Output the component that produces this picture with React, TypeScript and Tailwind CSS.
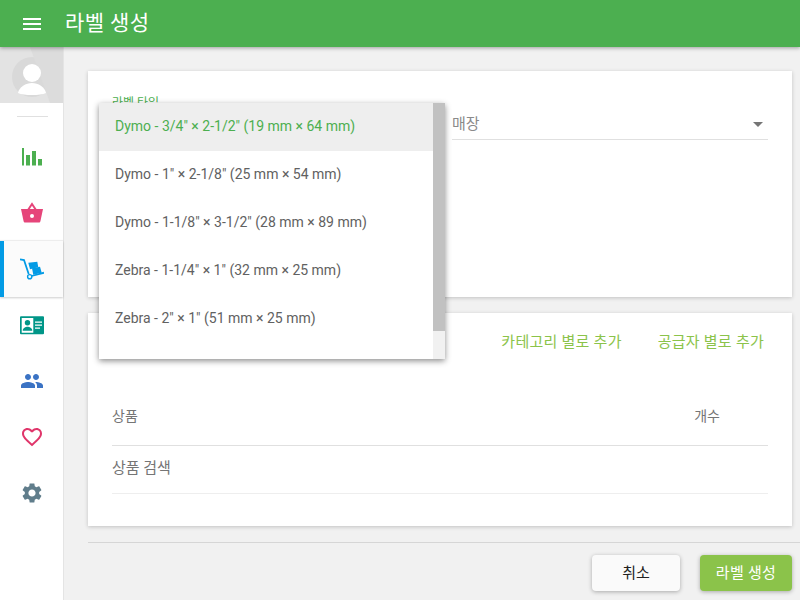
import type { ReactNode } from 'react';

const FONT = "font-['Roboto','Noto_Sans_CJK_KR',sans-serif]";

const LABEL_TYPES = [
  'Dymo - 3/4" × 2-1/2" (19 mm × 64 mm)',
  'Dymo - 1" × 2-1/8" (25 mm × 54 mm)',
  'Dymo - 1-1/8" × 3-1/2" (28 mm × 89 mm)',
  'Zebra - 1-1/4" × 1" (32 mm × 25 mm)',
  'Zebra - 2" × 1" (51 mm × 25 mm)',
];

function NavIcon({ color, children }: { color: string; children: ReactNode }) {
  return (
    <svg width={24} height={24} viewBox="0 0 24 24" fill={color}>
      {children}
    </svg>
  );
}

const NAV_ITEMS = [
  {
    key: 'stats',
    icon: (
      <NavIcon color="#4caf50">
        <path d="M2 3h2v17.600H2zM6 10h4v10.600H6zM12 6h4v14.600h-4zM18 14h4v6.600h-4z" />
      </NavIcon>
    ),
  },
  {
    key: 'basket',
    icon: (
      <NavIcon color="#e6457a">
        <path d="M1 8h22l-2.600 12.200c-.200.800-.700 1.300-1.500 1.300H5.100c-.800 0-1.300-.500-1.500-1.300z" />
        <path d="M8 9l4-6 4 6" fill="none" stroke="#e6457a" strokeWidth="2" />
        <circle cx="12" cy="15" r="2" fill="#fff" />
      </NavIcon>
    ),
  },
  {
    key: 'dolly',
    active: true,
    icon: (
      <NavIcon color="#039be5">
        <path d="M0 2.300L4 3l4.700 14" fill="none" stroke="#039be5" strokeWidth="1.800" />
        <circle cx="9.700" cy="19.700" r="2.100" fill="none" stroke="#039be5" strokeWidth="1.400" />
        <path d="M11.500 19L24 15.700" fill="none" stroke="#039be5" strokeWidth="1.800" />
        <path d="M8.300 5.700l9-1 1 5.600-8.300 2z" />
        <path d="M12 11.300l8-1.600 1.700 6-8.400 2z" />
      </NavIcon>
    ),
  },
  {
    key: 'customers',
    icon: (
      <NavIcon color="#009688">
        <path
          fillRule="evenodd"
          d="M1 3.300h22a1 1 0 0 1 1 1v16a1 1 0 0 1-1 1H1a1 1 0 0 1-1-1v-16a1 1 0 0 1 1-1zM1.700 5v14.800h11.600V5zM15 8.500v1.300h7V8.500zM15 11.500v1.300h7v-1.300zM15 14.500v1.300h5v-1.300z"
        />
        <circle cx="7.500" cy="9.700" r="2.700" />
        <path d="M2.700 17.800c0-2.700 3-4 4.800-4s4.800 1.300 4.800 4z" />
      </NavIcon>
    ),
  },
  {
    key: 'employees',
    icon: (
      <NavIcon color="#3b73c4">
        <path d="M16 11c1.660 0 2.990-1.340 2.990-3S17.660 5 16 5c-1.660 0-3 1.340-3 3s1.340 3 3 3zm-8 0c1.660 0 2.990-1.340 2.990-3S9.660 5 8 5C6.340 5 5 6.340 5 8s1.340 3 3 3zm0 2c-2.330 0-7 1.170-7 3.500V19h14v-2.500c0-2.330-4.670-3.500-7-3.500zm8 0c-.290 0-.620.020-.970.050 1.160.840 1.970 1.970 1.970 3.450V19h6v-2.500c0-2.330-4.670-3.500-7-3.500z" />
      </NavIcon>
    ),
  },
  {
    key: 'loyalty',
    icon: (
      <NavIcon color="#e0356a">
        <path d="M16.500 3c-1.740 0-3.410.810-4.500 2.090C10.910 3.810 9.240 3 7.500 3 4.420 3 2 5.420 2 8.500c0 3.780 3.400 6.860 8.550 11.540L12 21.350l1.450-1.320C18.600 15.360 22 12.280 22 8.500 22 5.420 19.580 3 16.500 3zm-4.400 15.550l-.100.100-.100-.100C7.140 14.240 4 11.390 4 8.500 4 6.500 5.500 5 7.500 5c1.540 0 3.040.990 3.570 2.360h1.870C13.460 5.990 14.960 5 16.500 5c2 0 3.500 1.500 3.500 3.500 0 2.890-3.140 5.740-7.900 10.050z" />
      </NavIcon>
    ),
  },
  {
    key: 'settings',
    icon: (
      <NavIcon color="#607d8b">
        <path d="M19.140 12.940c.040-.300.060-.610.060-.940 0-.320-.020-.640-.070-.940l2.030-1.580c.180-.140.230-.410.120-.610l-1.920-3.320c-.120-.220-.370-.290-.590-.220l-2.390.960c-.500-.380-1.030-.700-1.620-.940l-.360-2.540c-.040-.240-.240-.410-.480-.410h-3.840c-.240 0-.430.170-.470.410l-.360 2.540c-.590.240-1.130.570-1.620.940l-2.390-.960c-.220-.080-.470 0-.590.220L2.740 8.870c-.120.210-.080.470.120.610l2.030 1.580c-.050.300-.090.630-.090.940s.020.640.070.940l-2.030 1.580c-.180.140-.230.410-.120.610l1.920 3.320c.120.220.370.290.590.220l2.390-.960c.500.380 1.030.700 1.620.940l.360 2.540c.050.240.240.410.480.410h3.840c.240 0 .440-.170.470-.410l.360-2.540c.590-.240 1.130-.560 1.620-.940l2.390.960c.220.080.470 0 .590-.220l1.920-3.320c.120-.220.070-.470-.120-.610l-2.010-1.580zM12 15.600c-1.980 0-3.600-1.620-3.600-3.600s1.620-3.600 3.600-3.600 3.600 1.620 3.600 3.600-1.620 3.600-3.600 3.600z" />
      </NavIcon>
    ),
  },
];

function Avatar() {
  return (
    <div className="h-14 bg-[#e3e3e3] overflow-hidden">
      <svg width="63" height="56" viewBox="0 0 63 56" className="block">
        <circle cx="32" cy="30" r="20" fill="#d9d9d9" />
        <path d="M30 0h33v56H50z" fill="#dcdcdc" />
        <circle cx="32" cy="26" r="9" fill="#fff" />
        <path d="M18 46c1-6 8-10 14-10s13 4 14 10c-3 1.500-8 2-14 2s-11-.500-14-2z" fill="#fff" />
      </svg>
    </div>
  );
}

function Sidebar() {
  return (
    <aside className="w-16 shrink-0 bg-white border-r border-[#e4e4e4] flex flex-col">
      <Avatar />
      <div className="h-[26px] flex items-center justify-center pl-[1px]">
        <div className="w-[31px] h-px bg-[#e0e0e0]" />
      </div>
      <nav className="flex flex-col">
        {NAV_ITEMS.map((item) => (
          <div
            key={item.key}
            className={
              item.active
                ? 'h-14 flex items-center justify-center border-l-4 border-[#039be5] bg-[#fbfbfb] shadow-[0_1px_2px_rgba(0,0,0,0.2),0_-1px_1px_rgba(0,0,0,0.06)] pr-[3px]'
                : 'h-14 flex items-center justify-center pl-[1px]'
            }
          >
            {item.icon}
          </div>
        ))}
      </nav>
    </aside>
  );
}

function LabelDropdown() {
  return (
    <div className="absolute left-[11px] top-[32px] w-[346px] h-[256px] bg-white flex shadow-[0_2px_6px_rgba(0,0,0,0.45)] z-10">
      <ul className="flex-1">
        {LABEL_TYPES.map((label, i) => (
          <li
            key={label}
            className={
              i === 0
                ? 'h-12 px-4 pb-[2px] flex items-center text-sm bg-[#eeeeee] text-[#4caf50]'
                : 'h-12 px-4 pb-[2px] flex items-center text-sm text-[#616161]'
            }
          >
            {label}
          </li>
        ))}
      </ul>
      <div className="w-3 bg-[#f1f1f1]">
        <div className="h-[228px] bg-[#c1c1c1]" />
      </div>
    </div>
  );
}

function TypeCard() {
  return (
    <section className="relative h-[226px] bg-white shadow-[0_1px_4px_rgba(0,0,0,0.2)] px-6">
      <div className="flex gap-6">
        <div className="flex-1 pt-6">
          <div className="text-xs leading-4 text-[#4caf50]">라벨 타입</div>
        </div>
        <div className="w-[316px] mt-[37px] h-8 flex items-start justify-between border-b border-[#e0e0e0]">
          <span className="text-[15px] leading-8 text-[#8a8a8a]">매장</span>
          <span className="mt-[14px] mr-[5px] w-0 h-0 border-x-[5px] border-x-transparent border-t-[5px] border-t-[#757575]" />
        </div>
      </div>
      <LabelDropdown />
    </section>
  );
}

function ProductsCard() {
  return (
    <section className="h-[213px] mt-4 bg-white shadow-[0_1px_4px_rgba(0,0,0,0.2)] px-6">
      <div className="h-14 pt-[2px] flex items-center justify-end gap-9 pr-1 text-[15px] tracking-[0.25px] text-[#8bc34a]">
        <span>카테고리 별로 추가</span>
        <span>공급자 별로 추가</span>
      </div>
      <div className="h-[77px] flex items-center justify-between border-b border-[#e0e0e0] text-sm text-[#757575] pt-[18px] pr-12">
        <span>상품</span>
        <span>개수</span>
      </div>
      <div className="h-12 pb-[2px] flex items-center border-b border-[#eeeeee] text-[15px] text-[#757575]">상품 검색</div>
    </section>
  );
}

export default function App() {
  return (
    <div className={`${FONT} w-[800px] h-[600px] overflow-hidden bg-[#f1f1f1] flex flex-col`}>
      <header className="relative z-20 h-[47px] shrink-0 bg-[#4caf50] shadow-[0_1px_4px_rgba(0,0,0,0.35)] flex items-center pl-5 gap-[21px]">
        <svg width="24" height="24" viewBox="0 0 24 24" fill="#fff">
          <path d="M3 18h18v-2H3v2zm0-5h18v-2H3v2zm0-7v2h18V6H3z" />
        </svg>
        <h1 className="text-[21px] tracking-[0.4px] font-normal text-white">라벨 생성</h1>
      </header>
      <div className="flex-1 flex min-h-0">
        <Sidebar />
        <main className="flex-1 pl-6 flex flex-col">
          <div className="pt-6 pr-2">
            <TypeCard />
            <ProductsCard />
          </div>
          <div className="mt-4 border-t border-[#d6d6d6] pt-3 pr-2 flex justify-end gap-5">
            <button className="w-[88px] h-9 rounded-sm bg-[#fafafa] text-[15px] text-[#212121] shadow-[0_1px_4px_rgba(0,0,0,0.3)]">
              취소
            </button>
            <button className="w-[92px] h-9 rounded-sm bg-[#8bc34a] text-[15px] tracking-[0.3px] text-white shadow-[0_1px_4px_rgba(0,0,0,0.3)]">
              라벨 생성
            </button>
          </div>
        </main>
      </div>
    </div>
  );
}
